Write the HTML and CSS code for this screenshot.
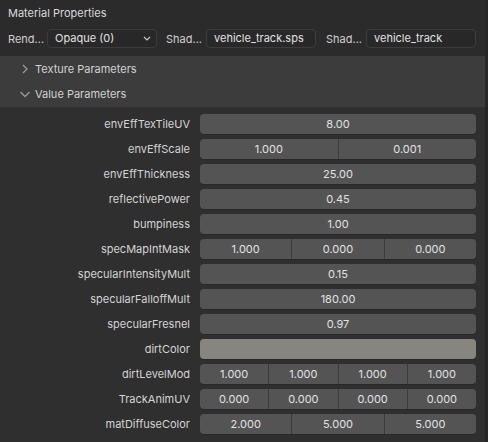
FILE: index.html
```html
<!DOCTYPE html>
<html>
<head>
<meta charset="utf-8">
<link rel="stylesheet" href="styles.css">
</head>
<body>
<div class="editor">
  <div class="panel">
    <div class="top">
      <div class="title">Material Properties</div>
      <div class="toprow">
        <span class="lbl">Rend...</span>
        <div class="dropdown"><span>Opaque (0)</span>
          <svg class="ddchev" width="8" height="5" viewBox="0 0 8 5"><path d="M1 1 L4 4 L7 1" fill="none" stroke="#c8c8c8" stroke-width="1.2"/></svg>
        </div>
        <span class="lbl">Shad...</span>
        <div class="text-input">vehicle_track.sps</div>
        <span class="lbl">Shad...</span>
        <div class="text-input">vehicle_track</div>
      </div>
    </div>
    <div class="subhead">
      <svg class="chev" width="10" height="10" viewBox="0 0 10 10"><path d="M3 1 L7 5 L3 9" fill="none" stroke="#9a9a9a" stroke-width="1.3"/></svg>
      <span>Texture Parameters</span>
    </div>
    <div class="subhead">
      <svg class="chev" width="10" height="10" viewBox="0 0 10 10"><path d="M0.5 3 L5 7.5 L9.5 3" fill="none" stroke="#9a9a9a" stroke-width="1.3"/></svg>
      <span>Value Parameters</span>
    </div>
    <div class="props">
      <div class="plabel">envEffTexTileUV</div><div class="field"><div class="seg">8.00</div></div>
      <div class="plabel">envEffScale</div><div class="field"><div class="seg">1.000</div><div class="seg">0.001</div></div>
      <div class="plabel">envEffThickness</div><div class="field"><div class="seg">25.00</div></div>
      <div class="plabel">reflectivePower</div><div class="field"><div class="seg">0.45</div></div>
      <div class="plabel">bumpiness</div><div class="field"><div class="seg">1.00</div></div>
      <div class="plabel">specMapIntMask</div><div class="field"><div class="seg">1.000</div><div class="seg">0.000</div><div class="seg">0.000</div></div>
      <div class="plabel">specularIntensityMult</div><div class="field"><div class="seg">0.15</div></div>
      <div class="plabel">specularFalloffMult</div><div class="field"><div class="seg">180.00</div></div>
      <div class="plabel">specularFresnel</div><div class="field"><div class="seg">0.97</div></div>
      <div class="plabel">dirtColor</div><div class="field color"></div>
      <div class="plabel">dirtLevelMod</div><div class="field"><div class="seg">1.000</div><div class="seg">1.000</div><div class="seg">1.000</div><div class="seg">1.000</div></div>
      <div class="plabel">TrackAnimUV</div><div class="field"><div class="seg">0.000</div><div class="seg">0.000</div><div class="seg">0.000</div><div class="seg">0.000</div></div>
      <div class="plabel">matDiffuseColor</div><div class="field"><div class="seg">2.000</div><div class="seg">5.000</div><div class="seg">5.000</div></div>
    </div>
  </div>
</div>
</body>
</html>
```
FILE: styles.css
```css
html, body {
  margin: 0;
  padding: 0;
  background: #262626;
}
body {
  width: 488px;
  height: 442px;
  overflow: hidden;
  font-family: Inter, "DejaVu Sans", sans-serif;
  font-size: 11px;
  color: #d4d4d4;
}
.editor {
  height: 442px;
  display: flex;
}
.panel {
  width: 485px;
  background: #2f2f2f;
  display: flex;
  flex-direction: column;
}
.top {
  background: #2b2b2b;
  height: 56px;
  box-sizing: border-box;
  padding: 5px 8px 0 8px;
}
.title {
  height: 16px;
  line-height: 16px;
  color: #dadada;
}
.toprow {
  margin-top: 8px;
  display: flex;
  align-items: center;
  height: 19px;
}
.lbl {
  color: #cfcfcf;
  width: 40px;
  flex: none;
}
.lbl:first-child { width: 39px; }
.dropdown, .text-input {
  flex: none;
  height: 19px;
  width: 110px;
  box-sizing: border-box;
  background: #282828;
  border: 1px solid #3c3c3c;
  border-radius: 4px;
  color: #e2e2e2;
  line-height: 17px;
  padding-left: 7px;
  position: relative;
}
.dropdown { margin-right: 9px; }
.text-input { margin-right: 10px; }
.text-input:last-child { margin-right: 0; }
.ddchev { position: absolute; right: 5px; top: 6px; }
.subhead {
  height: 25px;
  background: #3c3c3c;
  display: flex;
  align-items: center;
  padding-left: 20px;
  color: #d2d2d2;
}
.subhead + .subhead { height: 26px; }
.subhead .chev { margin-right: 5px; }
.props {
  padding-top: 7px;
  display: grid;
  grid-template-columns: 190px 276px;
  grid-auto-rows: 20px;
  column-gap: 10px;
  row-gap: 5px;
}
.plabel {
  text-align: right;
  line-height: 20px;
  color: #d4d4d4;
}
.field {
  display: flex;
  background: #545454;
  border-radius: 4px;
  box-shadow: 0 1px 0 #282828;
  overflow: hidden;
}
.field.color { background: #86857f; }
.seg {
  flex: 1;
  text-align: center;
  line-height: 20px;
  color: #e2e2e2;
}
.seg + .seg { border-left: 1px solid #3b3b3b; }
```
